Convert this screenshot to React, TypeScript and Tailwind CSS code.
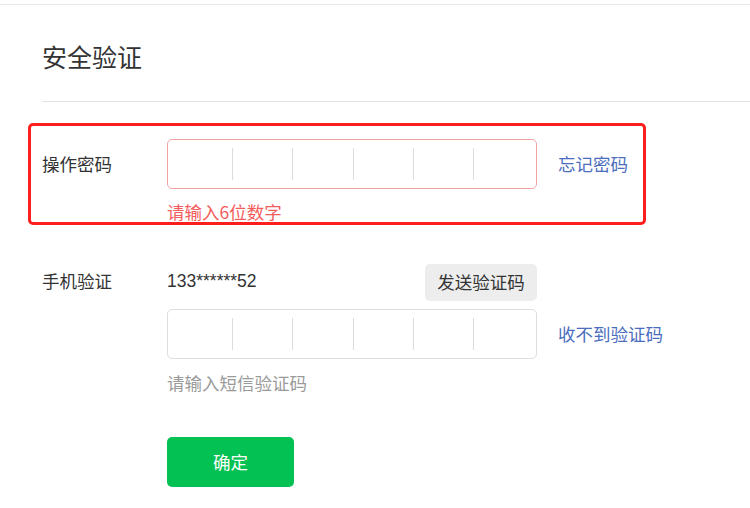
import React from 'react'

const font = { fontFamily: '"Microsoft YaHei", "Noto Sans CJK SC", "Liberation Sans", sans-serif' }

function CodeBox({ error }: { error?: boolean }) {
  return (
    <div
      className={`flex h-[50px] w-[370px] items-center rounded-[5px] border bg-white pl-[5px] pr-[3px] ${
        error ? 'border-[#f4a3a3]' : 'border-[#dedede]'
      }`}
    >
      {[0, 1, 2, 3, 4, 5].map((i) => (
        <div
          key={i}
          className={`h-[32px] flex-1 ${i > 0 ? 'border-l border-[#dcdcdc]' : ''}`}
        />
      ))}
    </div>
  )
}

export default function App() {
  return (
    <div className="relative min-h-[508px] w-[750px] bg-white pt-[4px] text-[#333]" style={font}>
      <div className="border-t border-[#e6e8ec]" />
      <div className="pl-[42px]">
        <h1 className="pt-[33px] pb-[27px] text-[25px] leading-[36px] font-normal text-[#333]">安全验证</h1>
        <div className="border-t border-[#e3e3e3]" />

        <div className="mt-[37px] flex items-center">
          <span className="w-[125px] text-[17.5px] leading-[24px]">操作密码</span>
          <CodeBox error />
          <a className="ml-[21px] text-[17.5px] leading-[24px] text-[#4a6dbd]">忘记密码</a>
        </div>
        <p className="mt-[11px] pl-[125px] text-[17.5px] leading-[24px] text-[#f45b5b]">请输入6位数字</p>

        <div className="mt-[40px] flex">
          <span className="flex h-[34px] w-[125px] items-center text-[17.5px] leading-[24px]">手机验证</span>
          <div>
            <div className="flex w-[370px] justify-between">
              <span
                className="flex h-[34px] items-center text-[17.5px] leading-[24px]"
                style={{ fontFamily: '"Liberation Sans", Arial, sans-serif' }}
              >
                133******52
              </span>
              <button className="h-[37px] w-[112px] rounded-[5px] bg-[#ededed] text-[17.5px] text-[#333]">发送验证码</button>
            </div>
            <div className="mt-[8px] flex items-center">
              <CodeBox />
              <a className="ml-[21px] text-[17.5px] leading-[24px] text-[#4a6dbd]">收不到验证码</a>
            </div>
            <p className="mt-[12px] text-[17.5px] leading-[24px] text-[#9a9a9a]">请输入短信验证码</p>
            <button className="mt-[42px] h-[50px] w-[127px] rounded-[5px] bg-[#03c152] text-[17.5px] text-white">确定</button>
          </div>
        </div>
      </div>

      <div className="pointer-events-none absolute top-[123px] left-[28px] h-[102px] w-[618px] rounded-[5px] border-[3px] border-[#ff1e1e]" />
    </div>
  )
}
